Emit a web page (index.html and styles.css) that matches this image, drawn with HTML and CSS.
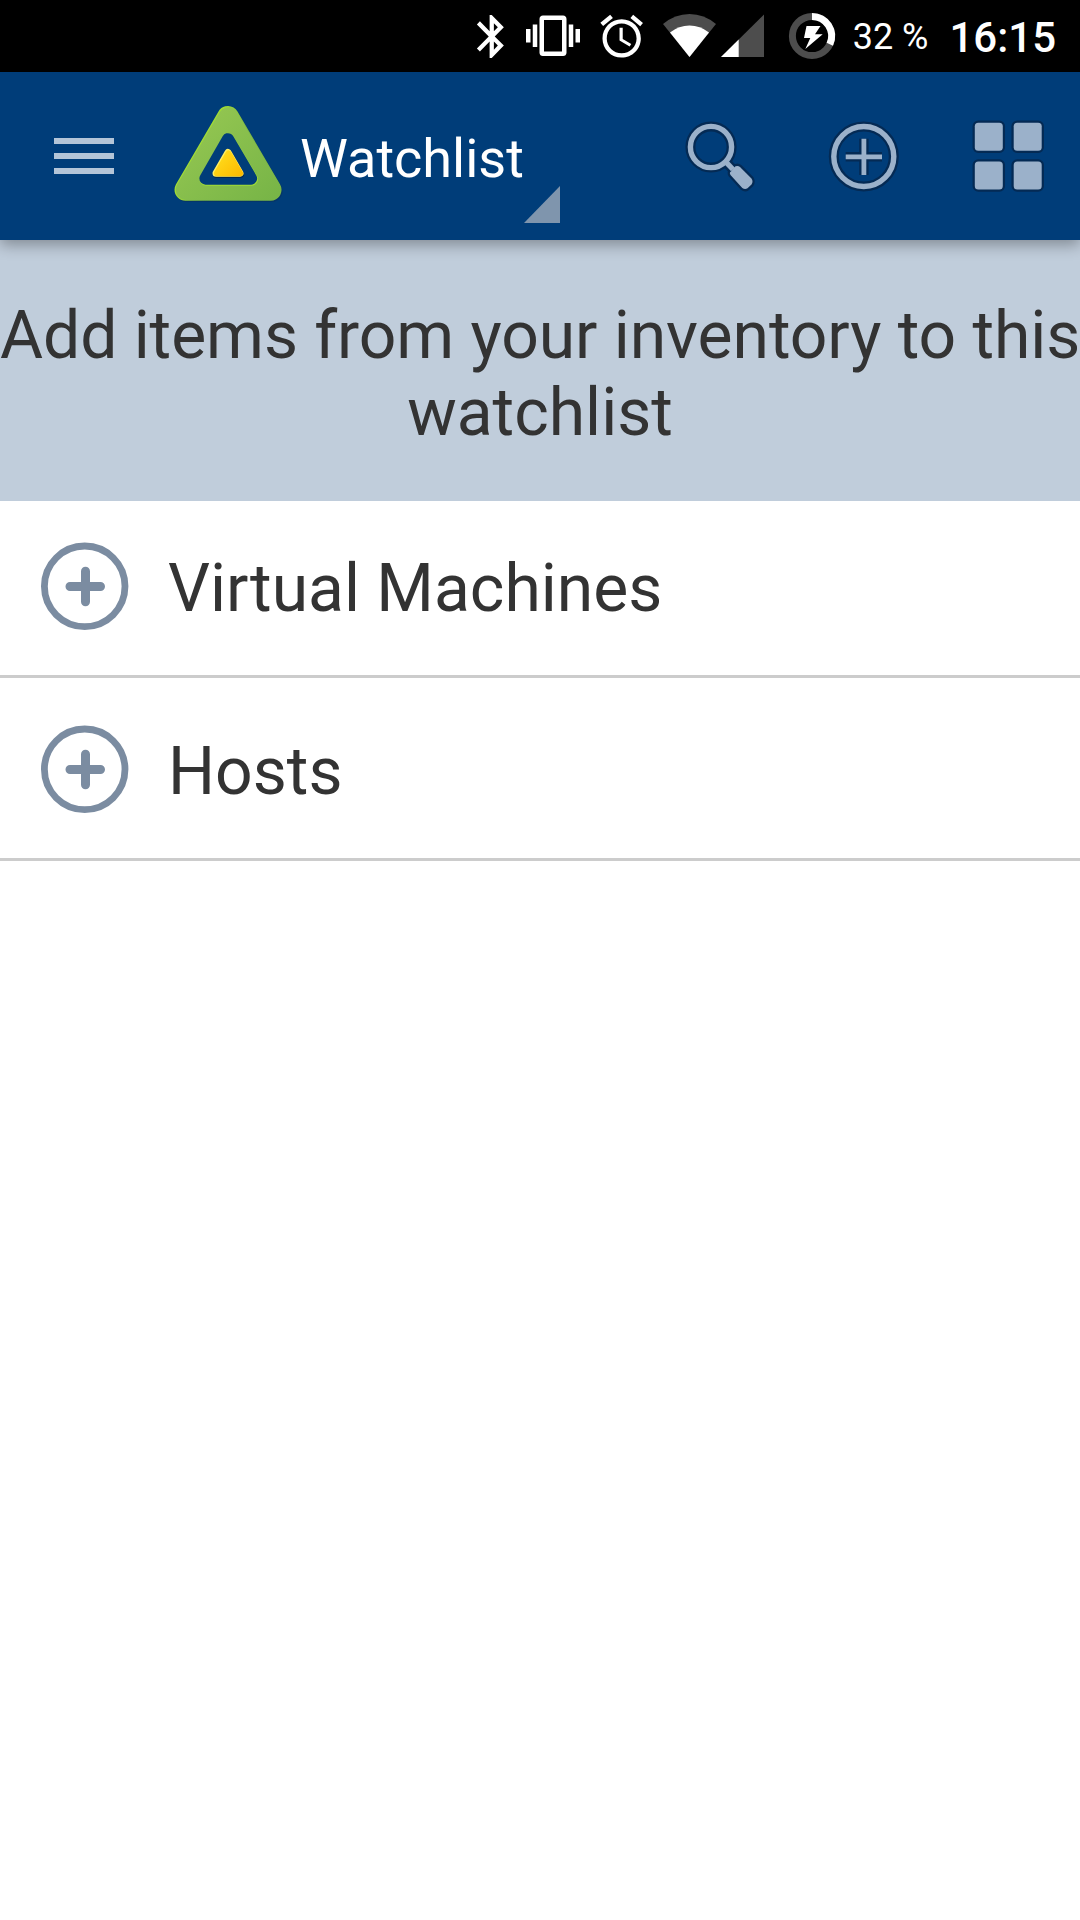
FILE: index.html
```
<!DOCTYPE html>
<html lang="en">
<head>
<meta charset="utf-8">
<title>Watchlist</title>
<link rel="stylesheet" href="styles.css">
</head>
<body>
<div class="status-bar">
  <div class="status-icons">
    <svg width="310" height="72" viewBox="460 0 310 72">
      <g fill="#fff">
        <path transform="translate(466.3 10.6) scale(2.12 2.15)" d="M17.71 7.71L12 2h-1v7.59L6.41 5 5 6.41 10.59 12 5 17.59 6.41 19 11 14.41V22h1l5.71-5.71-4.3-4.29 4.3-4.29zM13 5.83l1.88 1.88L13 9.59V5.83zm1.88 10.46L13 18.17v-3.76l1.88 1.88z"/>
        <path transform="translate(526 8.8) scale(2.25)" d="M0 15h2V9H0v6zm3 2h2V7H3v10zm19-8v6h2V9h-2zm-3 8h2V7h-2v10zM16.5 3h-9C6.67 3 6 3.67 6 4.5v15c0 .83.67 1.5 1.5 1.5h9c.83 0 1.5-.67 1.5-1.5v-15c0-.83-.67-1.5-1.5-1.5zM16 19H8V5h8v14z"/>
        <path transform="translate(596.1 10.7) scale(2.13)" d="M22 5.72l-4.6-3.86-1.29 1.53 4.6 3.86L22 5.72zM7.88 3.39L6.6 1.86 2 5.71l1.29 1.53 4.59-3.85zM12.5 8H11v6l4.75 2.85.75-1.23-4-2.37V8zM12 4c-4.97 0-9 4.03-9 9s4.02 9 9 9c4.97 0 9-4.03 9-9s-4.03-9-9-9zm0 16c-3.87 0-7-3.13-7-7s3.13-7 7-7 7 3.13 7 7-3.13 7-7 7z"/>
      </g>
      <path fill="#4d4d4d" d="M689.5 57L663 24Q675 14 689.5 14T716 24Z"/>
      <path fill="#fff" d="M689.5 57L670 32.5Q679 25.6 689.5 25.6T709 32.5Z"/>
      <path fill="#4d4d4d" d="M721 57L764 14.5V57Z"/>
      <path fill="#fff" d="M721 57L738.7 39.5V57Z"/>
    </svg>
    <svg width="60" height="72" viewBox="782 0 60 72">
      <circle cx="812" cy="36" r="19.6" fill="none" stroke="#4d4d4d" stroke-width="7"/>
      <path d="M812 16.4A19.6 19.6 0 0 1 829.8 44.2" fill="none" stroke="#fff" stroke-width="7"/>
      <path fill="#fff" d="M806.5 26h14l-5.5 8.3h7.7L805.3 49l5-11H804z"/>
    </svg>
  </div>
  <span class="battery">32 %</span>
  <span class="clock">16:15</span>
</div>

<header class="app-bar">
  <svg class="menu" width="60" height="36" viewBox="0 0 60 36" fill="#b4c5d8"><path d="M0 0h60v6H0zM0 15h60v6H0zM0 30h60v6H0z"/></svg>
  <svg class="logo" width="120" height="108" viewBox="168 102 120 108">
    <defs>
      <linearGradient id="green" gradientUnits="userSpaceOnUse" x1="190" y1="120" x2="265" y2="205"><stop offset="0" stop-color="#94c651"/><stop offset="1" stop-color="#78b547"/></linearGradient>
      <linearGradient id="lime" gradientUnits="userSpaceOnUse" x1="200" y1="150" x2="225" y2="164"><stop offset="0" stop-color="#a0dc34"/><stop offset="1" stop-color="#78b547"/></linearGradient>
      <linearGradient id="yellow" gradientUnits="userSpaceOnUse" x1="218" y1="155" x2="240" y2="177"><stop offset="0" stop-color="#ffdc1c"/><stop offset="1" stop-color="#fdb900"/></linearGradient>
    </defs>
    <g stroke-linejoin="round">
      <path d="M229 118.500L271.500 191H186.500z" fill="#0a2f5a" stroke="#0a2f5a" stroke-width="22" opacity=".5"/>
      <path d="M228 117L270.500 189.700H185.500z" fill="url(#lime)" stroke="url(#lime)" stroke-width="22"/>
      <path d="M228.300 117.600L270.500 189.700H186z" fill="url(#green)" stroke="url(#green)" stroke-width="20.500"/>
      <path d="M228.300 140L251.500 179.200H206z" fill="#a0dc34" stroke="#a0dc34" stroke-width="13"/>
      <path d="M228 139.300L251 178.500H205.500z" fill="#003d79" stroke="#003d79" stroke-width="12.300"/>
      <path d="M228.500 153.500L240.500 174.500H216.500z" fill="#06284d" stroke="#06284d" stroke-width="7"/>
      <path d="M228 152.500L240 173.300H216z" fill="#ffee62" stroke="#ffee62" stroke-width="7"/>
      <path d="M228.500 153.500L240 173.300H217z" fill="url(#yellow)" stroke="url(#yellow)" stroke-width="6"/>
    </g>
  </svg>
  <h1 class="title">Watchlist</h1>
  <svg class="caret" width="36" height="37" viewBox="0 0 36 37"><path d="M0 37L36 0V37z" fill="#7f95ad"/></svg>
  <svg class="actions" width="400" height="168" viewBox="680 72 400 168">
    <defs>
      <g id="glass">
        <circle cx="711" cy="147" r="20.600" fill="none" stroke-width="var(--ring)"/>
        <path d="M725 161L733 169.500" stroke-width="var(--ring)"/>
        <path class="fat" d="M733 169L735.500 166.300Q738 165.200 740 167L751.500 178.500Q753.500 181.500 751.500 184.500L747.500 188.300Q745 190 742.300 188L730.500 175Q729 172.500 731 171.500Z"/>
      </g>
      <g id="add">
        <circle cx="863.800" cy="156.500" r="30" fill="none" stroke-width="var(--ring)"/>
        <path class="cross" fill="none" d="M845.700 156.800H882M863.900 138.700V175"/>
      </g>
      <g id="tiles">
        <rect x="974.800" y="122.700" width="28" height="28" rx="3.500"/><rect x="1013.700" y="122.700" width="28" height="28" rx="3.500"/>
        <rect x="974.800" y="161.500" width="28" height="28" rx="3.500"/><rect x="1013.700" y="161.500" width="28" height="28" rx="3.500"/>
      </g>
    </defs>
    <g class="outline"><use href="#glass"/><use href="#add"/><use href="#tiles"/></g>
    <g class="face"><use href="#glass"/><use href="#add"/><use href="#tiles"/></g>
  </svg>
</header>

<main>
  <p class="hint">Add items from your inventory to this<br>watchlist</p>
  <ul class="list">
    <li class="row">
      <svg class="plus" width="90" height="90" viewBox="0 0 90 90"><circle cx="44.700" cy="45.300" r="40.300"/><path d="M30 45.500H60.500M45.500 30.300V60.800"/></svg>
      <span>Virtual Machines</span>
    </li>
    <li class="row">
      <svg class="plus" width="90" height="90" viewBox="0 0 90 90"><circle cx="44.700" cy="45.300" r="40.300"/><path d="M30 45.500H60.500M45.500 30.300V60.800"/></svg>
      <span>Hosts</span>
    </li>
  </ul>
</main>
</body>
</html>
```
FILE: styles.css
```
* { box-sizing: border-box; }
body {
  margin: 0;
  min-height: 1920px;
  background: #fff;
  color: #333;
  font-family: Roboto, sans-serif;
  overflow-x: hidden;
}
svg { display: block; flex: none; }

.status-bar {
  height: 72px;
  background: #000;
  color: #fff;
  display: flex;
  align-items: flex-start;
  justify-content: flex-end;
  padding-right: 24px;
}
.status-icons { display: flex; gap: 12px; margin-right: 11px; }
.battery { font-size: 36px; line-height: 75px; margin-right: 21px; white-space: nowrap; }
.clock { font-size: 42px; line-height: 76px; font-weight: 500; }

.app-bar {
  position: relative;
  z-index: 1;
  height: 168px;
  background: #003d79;
  color: #fff;
  display: flex;
  align-items: center;
  padding-left: 54px;
  box-shadow: 0 5px 14px rgba(0, 0, 0, .32);
}
.logo { margin-left: 54px; }
.title { margin: 5px 0 0 12px; font-size: 54px; font-weight: 400; line-height: 64px; }
.caret { align-self: flex-end; margin-bottom: 17px; }
.actions { margin-left: auto; }
.outline { --ring: 10px; fill: #042a54; stroke: #042a54; stroke-width: 4.5px; }
.outline .cross { stroke-width: 9px; }
.face { --ring: 5.4px; fill: #9bb1ca; stroke: #9bb1ca; stroke-width: 0; }
#add .cross { stroke-width: calc(var(--ring) - .6px); stroke-linecap: butt; }

.hint {
  margin: 0;
  height: 261px;
  padding-top: 57px;
  background: #c0cddb;
  font-size: 66px;
  line-height: 77px;
  text-align: center;
  white-space: nowrap;
}
.hint::first-line { letter-spacing: -.06px; }
.list { margin: 0; padding: 0; list-style: none; }
.row {
  height: 183px;
  border-bottom: 3px solid #ccc;
  display: flex;
  align-items: flex-start;
  padding: 46px 0 0 40px;
  font-size: 66px;
  line-height: 77px;
}
.row:first-child { height: 177px; padding-top: 40px; }
.row span { margin: 9px 0 0 38px; }
.plus { fill: none; stroke: #7b8ca1; stroke-width: 6.8px; }
.plus path { stroke-width: 9px; stroke-linecap: round; }
```
